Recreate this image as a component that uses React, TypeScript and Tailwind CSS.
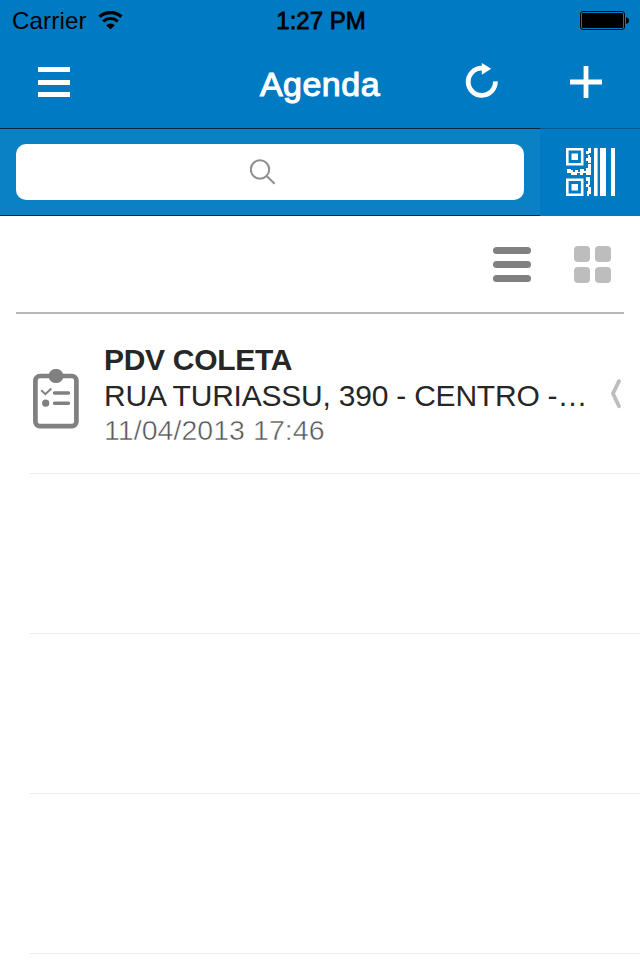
import React from 'react';

interface Visit {
  id: string;
  name: string;
  address: string;
  date: string;
}

const visits: Visit[] = [
  { id: '1', name: 'PDV COLETA', address: 'RUA TURIASSU, 390 - CENTRO -…', date: '11/04/2013 17:46' },
];

const WifiIcon = () => (
  <svg width="26" height="20" viewBox="0 0 26 20" fill="none" stroke="black">
    <path d="M1.6 5.8A16.2 16.2 0 0 1 23.4 5.8" strokeWidth="3.4" />
    <path d="M5.3 10.5A10.3 10.3 0 0 1 19.7 10.5" strokeWidth="3.1" />
    <path d="M12.5 18.5L8.2 14.2A6 6 0 0 1 16.8 14.2Z" fill="black" stroke="none" />
  </svg>
);

const BatteryIcon = () => (
  <svg width="50" height="20" viewBox="0 0 50 20">
    <rect x="0.5" y="1.5" width="44" height="18" rx="2.5" fill="none" stroke="black" />
    <rect x="2" y="3" width="41" height="15" rx="1" fill="black" />
    <path d="M46 7.2C50 7.6 50 13.4 46 13.8Z" fill="black" />
  </svg>
);

const RefreshIcon = () => (
  <svg width="34" height="36" viewBox="0 0 34 36">
    <path d="M30.4 19.4A13.6 13.6 0 1 1 17 6.2" fill="none" stroke="white" strokeWidth="4.8" />
    <path d="M16.8 0.9L26.2 6.8L16.8 12.8Z" fill="white" />
  </svg>
);

const CodeIcon = () => (
  <svg width="49" height="48" viewBox="0 0 49 48" fill="white">
    <path d="M1.3 1.3H16.2V16.2H1.3ZM1.3 31.8H16.2V46.7H1.3Z" fill="none" stroke="white" strokeWidth="2.6" />
    <path d="M5.5 5.5H12V12H5.5ZM5.5 36H12V42.5H5.5Z" />
    <path d="M28 0H31.6V48H28ZM34 0H40V48H34ZM45 0H49V48H45Z" />
    <path d="M22 0H25V5H23V6H20V3H22ZM22 7H24V9H25V15H22V13H20V10H22ZM22 16H25V27H20V25H17V27H14V25H11V27H5V25H1V21H5V22H7V24H9V22H12V24H14V21H18V23H20V20H22ZM20 29H24V37H23V39H25V46H23V48H21V43H22V39H20V36H22V33H20Z" />
  </svg>
);

const SearchIcon = () => (
  <svg width="27" height="27" viewBox="0 0 27 27" fill="none" stroke="#8e8e93" strokeWidth="2">
    <circle cx="10" cy="10.5" r="9.2" />
    <path d="M16.6 17L24.6 24.7" />
  </svg>
);

const ClipboardIcon = () => (
  <svg width="46" height="60" viewBox="0 0 46 60" fill="none" stroke="#808080">
    <rect x="2.4" y="7" width="41" height="50.2" rx="4.5" strokeWidth="4.7" />
    <rect x="15.7" y="0" width="14.6" height="14" rx="6.5" fill="#808080" stroke="none" />
    <path d="M8.2 21.2L12.4 25.2L18.3 19.6" strokeWidth="2" />
    <path d="M21.5 24H35.5M21.5 34.2H35.5" strokeWidth="3.4" strokeLinecap="round" />
    <circle cx="12.7" cy="34.2" r="3.6" fill="#808080" stroke="none" />
  </svg>
);

const StatusBar = () => (
  <div className="h-10 grid grid-cols-3 items-center pl-3 pr-[10px] text-2xl text-black">
    <div className="flex items-center gap-[11px] pt-0.5">
      <span className="tracking-[0.2px]">Carrier</span>
      <WifiIcon />
    </div>
    <span className="text-center pt-0.5 [-webkit-text-stroke:0.8px]">1:27 PM</span>
    <div className="flex justify-end">
      <BatteryIcon />
    </div>
  </div>
);

const NavBar = () => (
  <div className="h-[88px] grid grid-cols-[1fr_auto_1fr] items-center px-[38px]">
    <button className="flex flex-col gap-[7.5px] w-8 mb-1">
      <span className="h-[5px] w-full bg-white" />
      <span className="h-[5px] w-full bg-white" />
      <span className="h-[5px] w-full bg-white" />
    </button>
    <h1 className="text-[34px] leading-none text-white tracking-[0.5px] [-webkit-text-stroke:1.1px]">Agenda</h1>
    <div className="flex items-center justify-end gap-[71px] mb-1">
      <button className="mb-1"><RefreshIcon /></button>
      <button>
        <svg width="32" height="32" viewBox="0 0 32 32" stroke="white" strokeWidth="4.8">
          <path d="M0 16H32M16 0V32" />
        </svg>
      </button>
    </div>
  </div>
);

const SearchBar = () => (
  <div className="h-[88px] flex">
    <div className="flex-1 bg-[#0a80c5] border-y border-[#06273d] px-4 py-[15px]">
      <div className="h-14 bg-white rounded-[10px] flex items-center justify-center pr-[14px]">
        <SearchIcon />
      </div>
    </div>
    <button className="w-[100px] border-t border-[#05568a] flex items-center justify-center pb-[2px]">
      <CodeIcon />
    </button>
  </div>
);

const ViewToggle = () => (
  <div className="mx-4 h-[98px] border-b-2 border-[#b8b8b8] flex items-center justify-end gap-[43px] pr-[13px]">
    <button className="flex flex-col gap-[7px] w-[38px]">
      <span className="h-[7px] w-full rounded-full bg-[#808080]" />
      <span className="h-[7px] w-full rounded-full bg-[#808080]" />
      <span className="h-[7px] w-full rounded-full bg-[#808080]" />
    </button>
    <button className="grid grid-cols-2 gap-[5px]">
      {[0, 1, 2, 3].map((i) => (
        <span key={i} className="size-4 rounded-[4px] bg-[#bdbdbd]" />
      ))}
    </button>
  </div>
);

const VisitRow: React.FC<{ visit: Visit }> = ({ visit }) => (
  <div className="flex items-center h-full">
    <div className="w-[74px] pl-[3px] pt-[11px]"><ClipboardIcon /></div>
    <div className="flex-1 whitespace-nowrap pt-px">
      <h3 className="text-[30px] leading-9 font-bold text-[#262626] tracking-[-0.3px]">{visit.name}</h3>
      <p className="text-[30px] leading-9 text-[#262626] tracking-[-0.22px]">{visit.address}</p>
      <p className="text-[28.5px] leading-8 text-[#555] tracking-[0.05px] [-webkit-text-stroke:0.5px_white]">{visit.date}</p>
    </div>
    <svg className="mr-[18px]" width="12" height="30" viewBox="0 0 12 30" fill="none" stroke="#bdbdbd" strokeWidth="3.8" strokeLinecap="round" strokeLinejoin="round">
      <path d="M9 2.2L3 14.5L9 27.2" />
    </svg>
  </div>
);

export default function App() {
  return (
    <div className="w-[640px] h-[960px] overflow-hidden bg-white font-['Liberation_Sans',sans-serif]">
      <header className="bg-[#007ac2]">
        <StatusBar />
        <NavBar />
        <SearchBar />
      </header>
      <ViewToggle />
      <div className="pl-[30px]">
        {visits.map((visit) => (
          <div key={visit.id} className="h-40 border-b border-[#ececec]">
            <VisitRow visit={visit} />
          </div>
        ))}
        <div className="h-40 border-b border-[#ececec]" />
        <div className="h-40 border-b border-[#ececec]" />
        <div className="h-40 border-b border-[#ececec]" />
      </div>
    </div>
  );
}
